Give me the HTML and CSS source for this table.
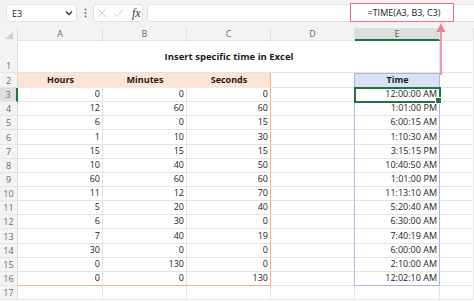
FILE: index.html
```html
<!DOCTYPE html>
<html lang="en">
<head>
    <meta charset="UTF-8">
    <title>Insert specific time in Excel</title>
    <link rel="stylesheet" href="styles.css">
</head>
<body>
    <!-- Name box + formula bar -->
    <div class="toolbar">
        <div class="namebox">
            <span>E3</span>
            <svg width="8" height="6" viewBox="0 0 8 6"><path d="M1 1.5 L4 4.5 L7 1.5" fill="none" stroke="#333" stroke-width="1.4"/></svg>
        </div>
        <div class="dots">
            <svg width="3" height="10" viewBox="0 0 3 10"><circle cx="1.5" cy="1.5" r="1" fill="#777"/><circle cx="1.5" cy="5" r="1" fill="#777"/><circle cx="1.5" cy="8.5" r="1" fill="#777"/></svg>
        </div>
        <div class="fxbox">
            <svg width="10" height="10" viewBox="0 0 10 10"><path d="M1 1 L9 9 M9 1 L1 9" stroke="#c9c9c9" stroke-width="1"/></svg>
            <svg width="11" height="10" viewBox="0 0 11 10"><path d="M1 5.5 L4 8.5 L10 1.5" fill="none" stroke="#c9c9c9" stroke-width="1"/></svg>
            <span class="fx">fx</span>
        </div>
        <div class="formula">
            <div class="callout">=TIME(A3, B3, C3)</div>
        </div>
    </div>

    <div class="sheet">
        <!-- column headers -->
        <div class="corner"><svg width="8" height="7" viewBox="0 0 8 7"><polygon points="8,0 8,7 0,7" fill="#cfcfcf"/></svg></div>
        <div class="ch">A</div>
        <div class="ch">B</div>
        <div class="ch">C</div>
        <div class="ch">D</div>
        <div class="ch ch-sel">E</div>
        <div class="ch"></div>

        <!-- row 1 -->
        <div class="rh">1</div>
        <div class="c title">Insert specific time in Excel</div>
        <div class="c"></div>

        <!-- row 2 -->
        <div class="rh">2</div>
        <div class="c hd">Hours</div>
        <div class="c hd">Minutes</div>
        <div class="c hd sep">Seconds</div>
        <div class="c d"></div>
        <div class="c e e-hd">Time</div>
        <div class="c"></div>

        <div class="rh rh-sel">3</div>
        <div class="c n">0</div><div class="c n">0</div><div class="c n sep">0</div><div class="c d"></div>
        <div class="c n e sel">12:00:00 AM</div><div class="c"></div>

        <div class="rh">4</div>
        <div class="c n">12</div><div class="c n">60</div><div class="c n sep">60</div><div class="c d"></div>
        <div class="c n e">1:01:00 PM</div><div class="c"></div>

        <div class="rh">5</div>
        <div class="c n">6</div><div class="c n">0</div><div class="c n sep">15</div><div class="c d"></div>
        <div class="c n e">6:00:15 AM</div><div class="c"></div>

        <div class="rh">6</div>
        <div class="c n">1</div><div class="c n">10</div><div class="c n sep">30</div><div class="c d"></div>
        <div class="c n e">1:10:30 AM</div><div class="c"></div>

        <div class="rh">7</div>
        <div class="c n">15</div><div class="c n">15</div><div class="c n sep">15</div><div class="c d"></div>
        <div class="c n e">3:15:15 PM</div><div class="c"></div>

        <div class="rh">8</div>
        <div class="c n">10</div><div class="c n">40</div><div class="c n sep">50</div><div class="c d"></div>
        <div class="c n e">10:40:50 AM</div><div class="c"></div>

        <div class="rh">9</div>
        <div class="c n">60</div><div class="c n">60</div><div class="c n sep">60</div><div class="c d"></div>
        <div class="c n e">1:01:00 PM</div><div class="c"></div>

        <div class="rh">10</div>
        <div class="c n">11</div><div class="c n">12</div><div class="c n sep">70</div><div class="c d"></div>
        <div class="c n e">11:13:10 AM</div><div class="c"></div>

        <div class="rh">11</div>
        <div class="c n">5</div><div class="c n">20</div><div class="c n sep">40</div><div class="c d"></div>
        <div class="c n e">5:20:40 AM</div><div class="c"></div>

        <div class="rh">12</div>
        <div class="c n">6</div><div class="c n">30</div><div class="c n sep">0</div><div class="c d"></div>
        <div class="c n e">6:30:00 AM</div><div class="c"></div>

        <div class="rh">13</div>
        <div class="c n">7</div><div class="c n">40</div><div class="c n sep">19</div><div class="c d"></div>
        <div class="c n e">7:40:19 AM</div><div class="c"></div>

        <div class="rh">14</div>
        <div class="c n">30</div><div class="c n">0</div><div class="c n sep">0</div><div class="c d"></div>
        <div class="c n e">6:00:00 AM</div><div class="c"></div>

        <div class="rh">15</div>
        <div class="c n">0</div><div class="c n">130</div><div class="c n sep">0</div><div class="c d"></div>
        <div class="c n e">2:10:00 AM</div><div class="c"></div>

        <div class="rh">16</div>
        <div class="c n last">0</div><div class="c n last">0</div><div class="c n sep last">130</div><div class="c d"></div>
        <div class="c n e e-end">12:02:10 AM</div><div class="c"></div>

        <div class="rh">17</div>
        <div class="c"></div><div class="c"></div><div class="c"></div><div class="c"></div><div class="c"></div><div class="c"></div>
    </div>

    <!-- callout arrow from E3 up to the formula -->
    <svg class="arrow" width="12" height="52" viewBox="0 0 12 52">
        <line x1="6" y1="7" x2="6" y2="52" stroke="#ef7f8e" stroke-width="1.6"/>
        <polygon points="6,0 1.5,9 10.5,9" fill="#ef7f8e"/>
    </svg>
</body>
</html>
```
FILE: styles.css
```css
* {
    margin: 0;
    padding: 0;
    box-sizing: border-box;
}
body {
    width: 474px;
    height: 301px;
    overflow: hidden;
    background: #fff;
    color: #1b1b1b;
    font-family: "Open Sans", "Noto Sans", sans-serif;
    font-size: 9px;
    position: relative;
}

/* formula bar strip */
.toolbar {
    display: flex;
    align-items: flex-start;
    height: 28px;
    padding: 4px 0 0 6px;
    background: #f3f3f3;
}
.namebox {
    width: 71px;
    height: 18px;
    display: flex;
    align-items: center;
    justify-content: space-between;
    padding: 0 3px 0 5px;
    background: #fff;
    border: 1px solid #e2e2e2;
    border-radius: 3px;
}
.dots {
    width: 16px;
    height: 18px;
    display: flex;
    align-items: center;
    justify-content: center;
}
.fxbox {
    width: 50px;
    height: 18px;
    margin-right: 4px;
    display: flex;
    align-items: center;
    gap: 6px;
    padding-left: 3px;
    background: #fff;
    border: 1px solid #e2e2e2;
    border-radius: 3px;
}
.fx {
    font-family: "Liberation Serif", "DejaVu Serif", serif;
    font-style: italic;
    font-size: 12px;
    color: #333;
    margin-left: 2px;
}
.formula {
    flex: 1;
    height: 18px;
    margin-right: -4px;
    display: flex;
    justify-content: flex-end;
    padding-right: 23px;
    background: #fff;
    border: 1px solid #e2e2e2;
    border-radius: 3px;
}
.callout {
    width: 104px;
    margin: -2px 0 -1px;
    display: flex;
    align-items: center;
    justify-content: center;
    padding-left: 4px;
    border: 1.5px solid #e8717f;
    background: #fff;
    color: #222;
}

/* worksheet grid */
.sheet {
    display: grid;
    grid-template-columns: 18px 85px 84px 84px 84px 85px 1fr;
    grid-template-rows: 13px 32px 15px repeat(15, 14.15px);
}
.corner {
    background: #f3f3f3;
    border-right: 1px solid #dcdcdc;
    display: flex;
    align-items: flex-end;
    justify-content: center;
    padding-bottom: 2px;
}
.ch {
    background: #f3f3f3;
    color: #6a6a6a;
    text-align: center;
    line-height: 12px;
    border-right: 1px solid #e0e0e0;
    border-bottom: 1px solid #e6e6e6;
}
.ch-sel {
    background: #dedede;
    color: #217346;
    border-bottom: 2px solid #217346;
}
.rh {
    background: #f3f3f3;
    color: #6a6a6a;
    display: flex;
    align-items: flex-end;
    justify-content: center;
    line-height: 12px;
    border-right: 1px solid #dcdcdc;
    border-bottom: 1px solid #e6e6e6;
}
.rh-sel {
    background: #dedede;
    border-right: 2px solid #217346;
}
.c {
    display: flex;
    align-items: flex-end;
    padding: 0 2px 1px 3px;
    line-height: 12px;
    white-space: nowrap;
    overflow: hidden;
    border-right: 1px solid #e3e3e3;
    border-bottom: 1px solid #e3e3e3;
}
.n {
    justify-content: flex-end;
}
.title {
    grid-column: span 5;
    align-items: center;
    justify-content: center;
    font-weight: 700;
    font-size: 9.5px;
    padding-top: 1px;
}
.hd {
    background: #fce4d6;
    justify-content: center;
    font-weight: 700;
    border-right-color: #fce4d6;
    border-bottom-color: #fce4d6;
}
.sep {
    border-right-color: #f4b183;
}
.last {
    border-bottom-color: #f4b183;
}
.d {
    border-right-color: #a7b8d8;
}
.e {
    border-right-color: #a7b8d8;
}
.e-hd {
    background: #d9e1f2;
    justify-content: center;
    font-weight: 700;
    border-bottom-color: #c8d3ea;
    box-shadow: inset 0 1px 0 #a7b8d8;
}
.e-end {
    border-bottom-color: #a7b8d8;
}
.sel {
    position: relative;
    overflow: visible;
    outline: 2px solid #217346;
    outline-offset: -1px;
}
.sel::after {
    content: "";
    position: absolute;
    right: -3px;
    bottom: -3px;
    width: 5px;
    height: 5px;
    background: #217346;
    border: 1px solid #fff;
}

.arrow {
    position: absolute;
    left: 434.5px;
    top: 23px;
}
```
